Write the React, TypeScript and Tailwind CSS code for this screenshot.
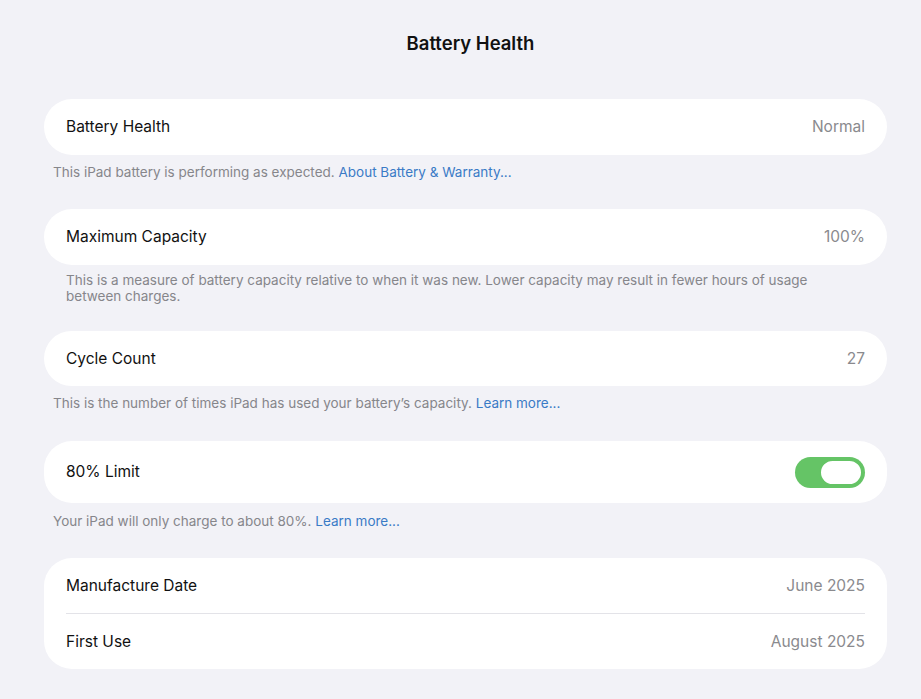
import React from 'react';

const font = { fontFamily: 'Inter, "Noto Sans", sans-serif' };

const Row: React.FC<{ label: string; value?: React.ReactNode; h?: string }> = ({ label, value, h = 'h-[56px]' }) => (
  <div className={`flex items-center justify-between ${h}`}>
    <span className="text-[15.5px] text-[#111]">{label}</span>
    {typeof value === 'string' ? <span className="text-[15.5px] text-[#8a8a8e]">{value}</span> : value}
  </div>
);

const Card: React.FC<{ children: React.ReactNode }> = ({ children }) => (
  <div className="bg-white rounded-[28px] pl-[22px] pr-[22px]">{children}</div>
);

const Link: React.FC<{ children: React.ReactNode }> = ({ children }) => (
  <span className="text-[#3a7bc6]">{children}</span>
);

const Toggle = () => (
  <div className="w-[70px] h-[31px] rounded-full bg-[#65c466] flex items-center justify-end p-[2px]">
    <div className="w-[44px] h-[27px] rounded-full bg-white border-[2px] border-[#65c466]"></div>
  </div>
);

export default function App() {
  return (
    <div className="min-h-[699px] bg-[#f2f2f7] pl-[44px] pr-[34px] pt-[31px] pb-[30px] antialiased" style={font}>
      <h1 className="text-center pl-[10px] text-[18.5px] leading-[24px] font-semibold text-[#111] mb-[44px]">Battery Health</h1>

      {/* Battery Health */}
      <Card>
        <Row label="Battery Health" value="Normal" />
      </Card>
      <p className="mt-[9px] mb-[29px] pl-[9px] text-[13.5px] leading-[16px] text-[#86868b]">
        This iPad battery is performing as expected. <Link>About Battery &amp; Warranty...</Link>
      </p>

      {/* Maximum Capacity */}
      <Card>
        <Row label="Maximum Capacity" value="100%" />
      </Card>
      <p className="mt-[7px] mb-[27px] pl-[22px] pr-[70px] text-[13.5px] leading-[16px] text-[#86868b]">
        This is a measure of battery capacity relative to when it was new. Lower capacity may result in fewer hours of usage between charges.
      </p>

      {/* Cycle Count */}
      <Card>
        <Row label="Cycle Count" value="27" h="h-[55px]" />
      </Card>
      <p className="mt-[9px] mb-[30px] pl-[9px] text-[13.5px] leading-[16px] text-[#86868b]">
        This is the number of times iPad has used your battery’s capacity. <Link>Learn more...</Link>
      </p>

      {/* 80% Limit */}
      <Card>
        <Row label="80% Limit" value={<Toggle />} h="h-[62px]" />
      </Card>
      <p className="mt-[10px] mb-[29px] pl-[9px] text-[13.5px] leading-[16px] text-[#86868b]">
        Your iPad will only charge to about 80%. <Link>Learn more...</Link>
      </p>

      {/* Dates */}
      <Card>
        <Row label="Manufacture Date" value="June 2025" h="h-[55px]" />
        <div className="h-px bg-[#e3e3e8]"></div>
        <Row label="First Use" value="August 2025" h="h-[55px]" />
      </Card>
    </div>
  );
}
